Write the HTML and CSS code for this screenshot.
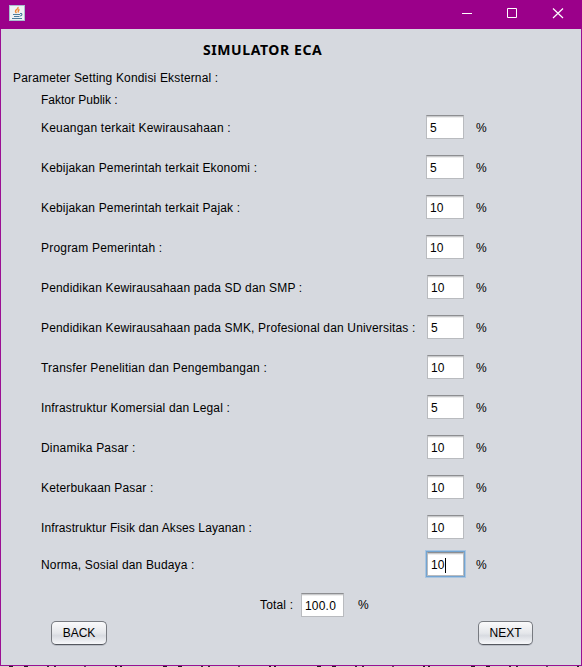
FILE: index.html
```html
<!DOCTYPE html>
<html lang="id">
<head>
<meta charset="utf-8">
<title>Simulator ECA</title>
<link rel="stylesheet" href="styles.css">
</head>
<body>
<main class="window">
  <header class="titlebar">
    <svg class="app-icon" width="16" height="16" viewBox="0 0 16 16">
      <rect width="16" height="16" fill="#a9bfce"/><rect x="1" y="1" width="14" height="14" fill="#eef2f4"/>
      <path d="M9 2q.5 1.500-1.500 2.700T7.500 8M10.500 4.500q-2 1-1 3" fill="none" stroke="#ef8b35" stroke-width="1.400"/>
      <path d="M4 9.500h7M5 11.500h5.500M3 13.500h10M11 8.500h1.500q1.300 1.700-1.500 2.500" fill="none" stroke="#4d7c9c" stroke-width="1.200"/>
    </svg>
    <svg class="controls" width="103" height="11" viewBox="0 0 103 11" fill="none" stroke="#fff">
      <path d="M0 5.500h10M45.500 .5h9v9h-9z"/><path d="M91 .5l10 9.500M101 .5l-10 9.500" stroke-width="1.200"/>
    </svg>
  </header>
  <h1 class="title">SIMULATOR ECA</h1>
  <p class="section">Parameter Setting Kondisi Eksternal :</p>
  <p class="subsection">Faktor Publik :</p>
  <form class="factors">
    <div class="row first loose"><span class="label">Keuangan terkait Kewirausahaan :</span><span class="field">5</span><span class="unit">%</span></div>
    <div class="row first"><span class="label">Kebijakan Pemerintah terkait Ekonomi :</span><span class="field">5</span><span class="unit">%</span></div>
    <div class="row first"><span class="label">Kebijakan Pemerintah terkait Pajak :</span><span class="field">10</span><span class="unit">%</span></div>
    <div class="row first loose"><span class="label">Program Pemerintah :</span><span class="field">10</span><span class="unit">%</span></div>
    <div class="row"><span class="label">Pendidikan Kewirausahaan pada SD dan SMP :</span><span class="field">10</span><span class="unit">%</span></div>
    <div class="row"><span class="label">Pendidikan Kewirausahaan pada SMK, Profesional dan Universitas :</span><span class="field">5</span><span class="unit">%</span></div>
    <div class="row loose"><span class="label">Transfer Penelitian dan Pengembangan :</span><span class="field">10</span><span class="unit">%</span></div>
    <div class="row"><span class="label">Infrastruktur Komersial dan Legal :</span><span class="field">5</span><span class="unit">%</span></div>
    <div class="row loose"><span class="label">Dinamika Pasar :</span><span class="field">10</span><span class="unit">%</span></div>
    <div class="row"><span class="label">Keterbukaan Pasar :</span><span class="field">10</span><span class="unit">%</span></div>
    <div class="row tight"><span class="label">Infrastruktur Fisik dan Akses Layanan :</span><span class="field">10</span><span class="unit">%</span></div>
    <div class="row last"><span class="label">Norma, Sosial dan Budaya :</span><span class="field focused">10<i class="caret"></i></span><span class="unit">%</span></div>
  </form>
  <div class="total"><span class="total-label">Total :</span><span class="field total-field">100.0</span><span class="total-unit">%</span></div>
  <footer class="actions"><button class="btn">BACK</button><button class="btn next">NEXT</button></footer>
</main>
<div class="behind"></div>
</body>
</html>
```
FILE: styles.css
```css
* { box-sizing: border-box; }
body { margin: 0; height: 667px; overflow: hidden; font: 12px/16px "Liberation Sans", Arial, sans-serif; color: #000; }
.window { display: flex; flex-direction: column; height: 666px; border: 1px solid #9b0f93; border-top: 0; background: #d6d9df; }
.titlebar { display: flex; justify-content: space-between; height: 29px; padding: 5px 17px 0 8px; margin: 0 -1px; background: #9b008a; flex: none; }
.app-icon { margin-left: 1px; }
.controls { margin-top: 3px; }
.title { height: 20px; margin: 11px 0 0 202px; font: bold 14px/20px "Noto Sans", sans-serif; letter-spacing: .58px; }
.section { margin: 10px 0 0 12px; letter-spacing: .16px; }
.subsection { margin: 6px 0 0 40px; }
.factors { margin-left: 40px; }
.row { display: flex; align-items: center; height: 40px; }
.label { width: 386px; white-space: nowrap; letter-spacing: .16px; }
.loose .label { letter-spacing: .2px; }
.tight .label { letter-spacing: .11px; }
.first .label { width: 385px; }
.first .field { width: 38px; }
.field { display: flex; align-items: center; width: 37px; height: 24px; padding: 2px 0 0 3px; border: 1px solid #b9bbbf; border-top-color: #8d8e91; background: linear-gradient(#c9cacc 0 1px, #eee 1px 2px, #fff 2px); position: relative; top: -1px; letter-spacing: .2px; }
.unit { margin-left: 12px; }
.last { height: 34px; }
.focused { box-shadow: 0 0 0 1px #73a4d1, 0 0 0 2px #a9c5e0; }
.caret { width: 1px; height: 15px; background: #000; }
.total { display: flex; align-items: center; height: 24px; margin: 11px 0 0 259px; }
.total-label { width: 41px; letter-spacing: .16px; }
.total-field { width: 43px; top: 0; }
.total-unit { margin-left: 14px; }
.actions { display: flex; justify-content: space-between; margin: 4px 48px 0 50px; }
.btn { width: 56px; height: 24px; padding: 0; border: 1px solid #777a80; border-bottom-color: #55585f; border-radius: 5px; background: linear-gradient(#fafafb, #e5e7eb 50%, #d8dbe1 62%, #f7f8fa); box-shadow: 0 1px 0 #b9bdc5; font: 12px "Liberation Sans", sans-serif; color: #000; }
.next { width: 55px; }
.behind { height: 1px; background: repeating-linear-gradient(90deg, #d8d5cb 0 9px, #222 9px 13px, #d8d5cb 13px 24px, #222 24px 28px, #d8d5cb 28px 47px, #333 47px 49px, #d8d5cb 49px 54px, #333 54px 56px, #d8d5cb 56px 84px, #555 84px 86px, #d8d5cb 86px 115px, #222 115px 117px, #d8d5cb 117px 120px, #222 120px 122px, #d8d5cb 122px 154px); }
```
